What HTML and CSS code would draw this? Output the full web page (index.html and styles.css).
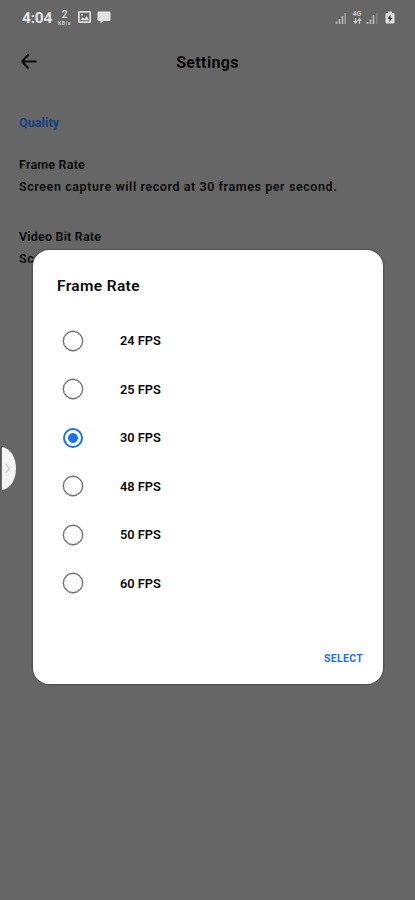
FILE: index.html
```html
<!DOCTYPE html>
<html lang="en">
<head>
<meta charset="utf-8">
<title>Settings</title>
<link rel="stylesheet" href="styles.css">
</head>
<body>
<div class="screen">
  <header class="status">
    <span class="clock">4:04</span>
    <span class="speed"><b>2</b><small>KB/s</small></span>
    <svg class="picture" width="13" height="12" viewBox="0 0 13 12"><rect x=".8" y=".8" width="11.4" height="10.4" rx="1" fill="none" stroke="#dedede" stroke-width="1.8"/><path d="M2.3 9.2 4.700 6.300l1.700 1.500L8.800 5l2 4.200z" fill="#dedede"/><circle cx="4" cy="3.800" r="1" fill="#dedede"/></svg>
    <svg class="chat" width="14" height="13" viewBox="0 0 14 13"><path d="M1.500.5h11q1 0 1 1v7.500q0 1-1 1H6.500L3.500 12.500V10h-2q-1 0-1-1V1.500q0-1 1-1z" fill="#e2e2e2"/></svg>
    <span class="gap"></span>
    <svg class="signal" width="12" height="12" viewBox="0 0 12 12"><path d="M1.500 9.500V12M4.500 7v5M7.500 4v8" stroke="#b8b8b8" stroke-width="1.700"/><path d="M10.200 1v11" stroke="#a0a0a0" stroke-width="1.500"/></svg>
    <span class="network"><b>4G</b><svg width="9" height="6" viewBox="0 0 9 6"><path d="M2.500 0v5M.8 3.200l1.700 2 1.700-2M6.500 6V1M4.800 2.800l1.700-2 1.700 2" fill="none" stroke="#c8c8c8" stroke-width="1.200"/></svg></span>
    <svg class="signal" width="12" height="12" viewBox="0 0 12 12"><path d="M1.500 10v2M4.500 7.500V12M7.500 3v9" stroke="#b8b8b8" stroke-width="1.700"/><path d="M10.800 1v11" stroke="#888" stroke-width="1.200"/></svg>
    <svg class="battery" width="10" height="13" viewBox="0 0 10 13"><path d="M3 .5h4v1.500h1.500q1 0 1 1v8.500q0 1-1 1h-7q-1 0-1-1V3q0-1 1-1H3z" fill="#dedede"/><path d="M5.500 3.500 2.500 7.800h2V11l3-4.300h-2z" fill="#333"/></svg>
  </header>
  <nav class="appbar">
    <svg class="back" width="18" height="17" viewBox="0 0 18 17"><path d="M8.700 1.500 2 8.500l6.700 7M2 8.500h14.500" fill="none" stroke="#080808" stroke-width="1.900" stroke-linejoin="round"/></svg>
    <h1 class="title">Settings</h1>
  </nav>
  <main class="settings">
    <h2 class="section"><span>Quality</span></h2>
    <section class="setting"><h3><span>Frame Rate</span></h3><p><span>Screen capture will record at 30 frames per second.</span></p></section>
    <section class="setting"><h3><span>Video Bit Rate</span></h3><p><span>Sc</span></p></section>
  </main>
  <svg class="handle" width="17" height="46" viewBox="0 0 17 46"><path d="M0 1v43" stroke="#555" stroke-width="2"/><path d="M2 1C10 2 16 11 16 22.500S10 43 2 44z" fill="#f4f4f4"/><path d="m5.500 18 4 4.500-4 4.500" fill="none" stroke="#ccc" stroke-width="1.200"/></svg>
  <div class="dialog" role="dialog" aria-label="Frame Rate">
    <h2 class="dialog-title"><span>Frame Rate</span></h2>
    <ul class="options">
      <li><i class="radio"></i><span>24 FPS</span></li>
      <li><i class="radio"></i><span>25 FPS</span></li>
      <li><i class="radio checked"></i><span>30 FPS</span></li>
      <li><i class="radio"></i><span>48 FPS</span></li>
      <li><i class="radio"></i><span>50 FPS</span></li>
      <li><i class="radio"></i><span>60 FPS</span></li>
    </ul>
    <button class="select">SELECT</button>
  </div>
</div>
</body>
</html>
```
FILE: styles.css
```css
* { box-sizing: border-box; margin: 0; padding: 0; }
body { font-family: Roboto, sans-serif; background: #666; color: #090909; }
.screen { position: relative; width: 415px; height: 900px; overflow: hidden; background: #666; }
.status { display: flex; align-items: center; height: 35px; padding: 0 20px 0 22px; color: #e4e4e4; }
.clock { width: 35px; font-size: 15.5px; font-weight: 700; letter-spacing: -.2px; }
.speed { display: flex; flex-direction: column; align-items: center; width: 15px; margin-right: 6px; line-height: 1; color: #d0d0d0; }
.speed b { font-size: 10px; line-height: 10px; }
.speed small { font-size: 5px; font-weight: 700; line-height: 6px; letter-spacing: .6px; }
.picture { margin-top: -1px; }
.chat { margin-left: 6px; }
.gap { flex: 1; }
.network { display: flex; flex-direction: column; align-items: center; width: 10px; margin: 0 4px 0 5px; color: #c8c8c8; }
.network b { font-size: 7px; line-height: 7px; }
.battery { margin-left: 7px; }
.appbar { display: grid; grid-template-columns: 50px 1fr 50px; align-items: center; height: 55px; }
.back { margin: -2px 0 0 20px; }
.title { justify-self: center; font-size: 16px; line-height: 20px; font-weight: 700; letter-spacing: .35px; }
.settings { padding: 23px 18px 0 19px; }
.section { height: 20px; font-size: 12.5px; line-height: 20px; font-weight: 700; letter-spacing: .1px; color: #173f85; }
.setting { height: 72px; }
.section + .setting { margin-top: 22px; }
.setting h3 { font-size: 12.5px; line-height: 20px; font-weight: 600; letter-spacing: .2px; }
.setting p { margin-top: 2px; font-size: 12.5px; line-height: 20px; font-weight: 600; letter-spacing: .58px; white-space: nowrap; }
.handle { position: absolute; left: 0; top: 446px; }
.dialog { position: absolute; left: 33px; top: 250px; width: 350px; height: 434px; padding: 24px 20px 0 24px; background: #fff; border-radius: 16px; box-shadow: 0 0 2px #222; }
.dialog-title { height: 24px; font-size: 15.5px; line-height: 24px; font-weight: 600; letter-spacing: .35px; }
.options { margin-top: 18.5px; list-style: none; }
.options li { display: flex; align-items: center; height: 48.5px; padding-left: 6px; font-size: 12.8px; font-weight: 600; }
.radio { width: 20px; height: 20px; margin-right: 37px; border: 1.7px solid #5d5d5d; border-radius: 50%; box-shadow: 0 0 0 .4px #666; }
.radio.checked { border: 2px solid #1b72ee; box-shadow: none; background: radial-gradient(circle, #1b72ee 0 4.500px, transparent 5.200px); }
.select { display: block; margin: 41px 0 0 auto; border: 0; background: none; color: #2770e8; font: 700 10.500px/20px Roboto, sans-serif; letter-spacing: .3px; }
```
